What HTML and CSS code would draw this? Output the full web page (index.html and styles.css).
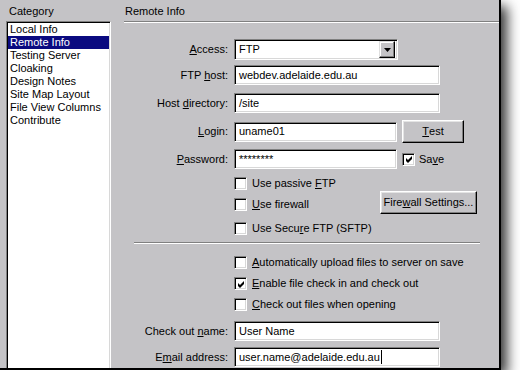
FILE: index.html
```html
<!DOCTYPE html>
<html>
<head>
<meta charset="utf-8">
<link rel="stylesheet" href="styles.css">
</head>
<body>
<div class="window">
  <div class="sidebar">
    <div class="caption">Category</div>
    <div class="listbox">
      <div class="item">Local Info</div>
      <div class="item sel">Remote Info</div>
      <div class="item">Testing Server</div>
      <div class="item">Cloaking</div>
      <div class="item">Design Notes</div>
      <div class="item">Site Map Layout</div>
      <div class="item">File View Columns</div>
      <div class="item">Contribute</div>
    </div>
  </div>
  <div class="main">
    <div class="title">Remote Info</div>
    <div class="etch"></div>

    <div class="row r-access">
      <div class="label"><u>A</u>ccess:</div>
      <div class="select">
        <span class="sel-text">FTP</span>
        <span class="drop"><svg width="7" height="4" viewBox="0 0 7 4"><polygon points="0,0 7,0 3.5,4" fill="#000"/></svg></span>
      </div>
    </div>

    <div class="row r-host">
      <div class="label">FTP <u>h</u>ost:</div>
      <div class="field wide">webdev.adelaide.edu.au</div>
    </div>

    <div class="row r-dir">
      <div class="label">Host <u>d</u>irectory:</div>
      <div class="field wide">/site</div>
    </div>

    <div class="row r-login">
      <div class="label"><u>L</u>ogin:</div>
      <div class="ctl">
        <div class="field narrow">uname01</div>
        <div class="button test"><u>T</u>est</div>
      </div>
    </div>

    <div class="row r-pass">
      <div class="label"><u>P</u>assword:</div>
      <div class="ctl">
        <div class="field narrow">********</div>
        <div class="check save"><span class="box checked"><svg width="7" height="7" viewBox="0 0 7 7"><polygon points="0,2 2,4 6,0 6,3 2,7 0,5" fill="#000"/></svg></span><span>Sa<u>v</u>e</span></div>
      </div>
    </div>

    <div class="row r-passive">
      <div class="label"></div>
      <div class="check"><span class="box"></span><span>Use passive <u>F</u>TP</span></div>
    </div>

    <div class="row r-firewall">
      <div class="label"></div>
      <div class="ctl">
        <div class="check fw"><span class="box"></span><span><u>U</u>se firewall</span></div>
        <div class="button fwbtn">Fire<u>w</u>all Settings...</div>
      </div>
    </div>

    <div class="row r-sftp">
      <div class="label"></div>
      <div class="check"><span class="box"></span><span>Use Secu<u>r</u>e FTP (SFTP)</span></div>
    </div>

    <div class="etch mid"></div>

    <div class="row r-auto">
      <div class="label"></div>
      <div class="check"><span class="box"></span><span><u>A</u>utomatically upload files to server on save</span></div>
    </div>

    <div class="row r-enable">
      <div class="label"></div>
      <div class="check"><span class="box checked"><svg width="7" height="7" viewBox="0 0 7 7"><polygon points="0,2 2,4 6,0 6,3 2,7 0,5" fill="#000"/></svg></span><span><u>E</u>nable file check in and check out</span></div>
    </div>

    <div class="row r-open">
      <div class="label"></div>
      <div class="check"><span class="box"></span><span><u>C</u>heck out files when opening</span></div>
    </div>

    <div class="row r-name">
      <div class="label">Check out <u>n</u>ame:</div>
      <div class="field wide">User Name</div>
    </div>

    <div class="row r-email">
      <div class="label">E<u>m</u>ail address:</div>
      <div class="field wide">user.name@adelaide.edu.au<span class="caret"></span></div>
    </div>
  </div>
</div>
</body>
</html>
```

FILE: styles.css
```css
html, body {
  margin: 0;
  padding: 0;
  background: #fff;
}
body {
  font-family: "Liberation Sans", Arial, sans-serif;
  font-size: 11px;
  line-height: 13px;
  color: #000;
}
u { text-decoration: underline; text-underline-offset: 1px; }

.window {
  width: 499px;
  height: 368px;
  background: #c4c3c6;
  border-right: 2px solid #000;
  border-bottom: 2px solid #000;
  box-shadow: 6px 6px 12px rgba(0, 0, 0, 0.8);
  display: flex;
  overflow: hidden;
}

/* sidebar */
.sidebar {
  width: 105px;
  padding-left: 6px;
  flex: none;
}
.caption {
  padding: 5px 0 0 3px;
  height: 13px;
}
.listbox {
  margin-top: 3px;
  height: 400px;
  background: #fff;
  border: 1px solid;
  border-color: #808080 #fff #fff #808080;
  box-shadow: inset 1px 1px 0 #000, inset -1px -1px 0 #d8d8d8;
  padding: 1px;
}
.item {
  height: 13px;
  padding-left: 2px;
  white-space: nowrap;
}
.item.sel {
  background: #0a0a80;
  color: #fff;
}

/* main */
.main {
  margin-left: 13px;
  flex: 1;
}
.title {
  padding: 5px 0 0 1px;
  height: 13px;
}
.etch {
  margin-top: 3px;
  border-top: 1px solid #808080;
  border-bottom: 1px solid #fff;
}
.etch.mid {
  margin-top: 7px;
  margin-left: 10px;
  width: 346px;
}

.row {
  display: grid;
  grid-template-columns: 104px auto;
  column-gap: 6px;
  align-items: center;
}
.label {
  text-align: right;
  white-space: nowrap;
}
.ctl {
  display: flex;
  align-items: center;
}

.r-access { margin-top: 16px; height: 21px; }
.r-host { margin-top: 5px; height: 20px; }
.r-dir { margin-top: 8px; height: 20px; }
.r-login { margin-top: 7px; height: 23px; }
.r-pass { margin-top: 6px; height: 20px; }
.r-passive { margin-top: 8px; height: 13px; }
.r-firewall { margin-top: 1px; height: 23px; }
.r-sftp { margin-top: 8px; height: 13px; }
.r-auto { margin-top: 12px; height: 13px; }
.r-enable { margin-top: 8px; height: 13px; }
.r-open { margin-top: 8px; height: 13px; }
.r-name { margin-top: 10px; height: 20px; }
.r-email { margin-top: 6px; height: 20px; }

/* sunken controls */
.field, .select {
  box-sizing: border-box;
  height: 20px;
  background: #fff;
  border: 1px solid;
  border-color: #808080 #fff #fff #808080;
  box-shadow: inset 1px 1px 0 #000, inset -1px -1px 0 #d8d8d8;
  padding-left: 4px;
  display: flex;
  align-items: center;
  white-space: nowrap;
}
.field.wide { width: 206px; }
.field.narrow { width: 163px; }

.select {
  width: 164px;
  height: 21px;
  padding: 2px 2px 2px 4px;
  justify-content: space-between;
}
.drop {
  box-sizing: border-box;
  width: 16px;
  height: 17px;
  background: #c4c3c6;
  border: 1px solid;
  border-color: #dfdfdf #000 #000 #dfdfdf;
  box-shadow: inset -1px -1px 0 #808080, inset 1px 1px 0 #fff;
  display: flex;
  align-items: center;
  justify-content: center;
}
.drop svg { display: block; }

.caret {
  display: inline-block;
  width: 1px;
  height: 14px;
  background: #000;
  margin-left: 1px;
}

/* buttons */
.button {
  box-sizing: border-box;
  height: 23px;
  background: #c4c3c6;
  border: 1px solid;
  border-color: #fff #000 #000 #fff;
  box-shadow: inset -1px -1px 0 #808080, inset 1px 1px 0 #e4e4e4;
  display: flex;
  align-items: center;
  justify-content: center;
  white-space: nowrap;
}
.button.test {
  width: 62px;
  margin-left: 5px;
}
.button.fwbtn {
  width: 97px;
}

/* checkboxes */
.check {
  display: flex;
  align-items: center;
  height: 13px;
  white-space: nowrap;
}
.box {
  box-sizing: border-box;
  width: 13px;
  height: 13px;
  flex: none;
  background: #fff;
  border: 1px solid;
  border-color: #808080 #fff #fff #808080;
  box-shadow: inset 1px 1px 0 #000, inset -1px -1px 0 #d8d8d8;
  margin-right: 5px;
  display: flex;
  align-items: center;
  justify-content: center;
}
.box svg { display: block; margin: 1px 0 0 1px; }
.check.save { margin-left: 5px; }
.check.save .box { margin-right: 4px; }
.check.fw {
  width: 146px;
  margin-top: 4px;
}
```
